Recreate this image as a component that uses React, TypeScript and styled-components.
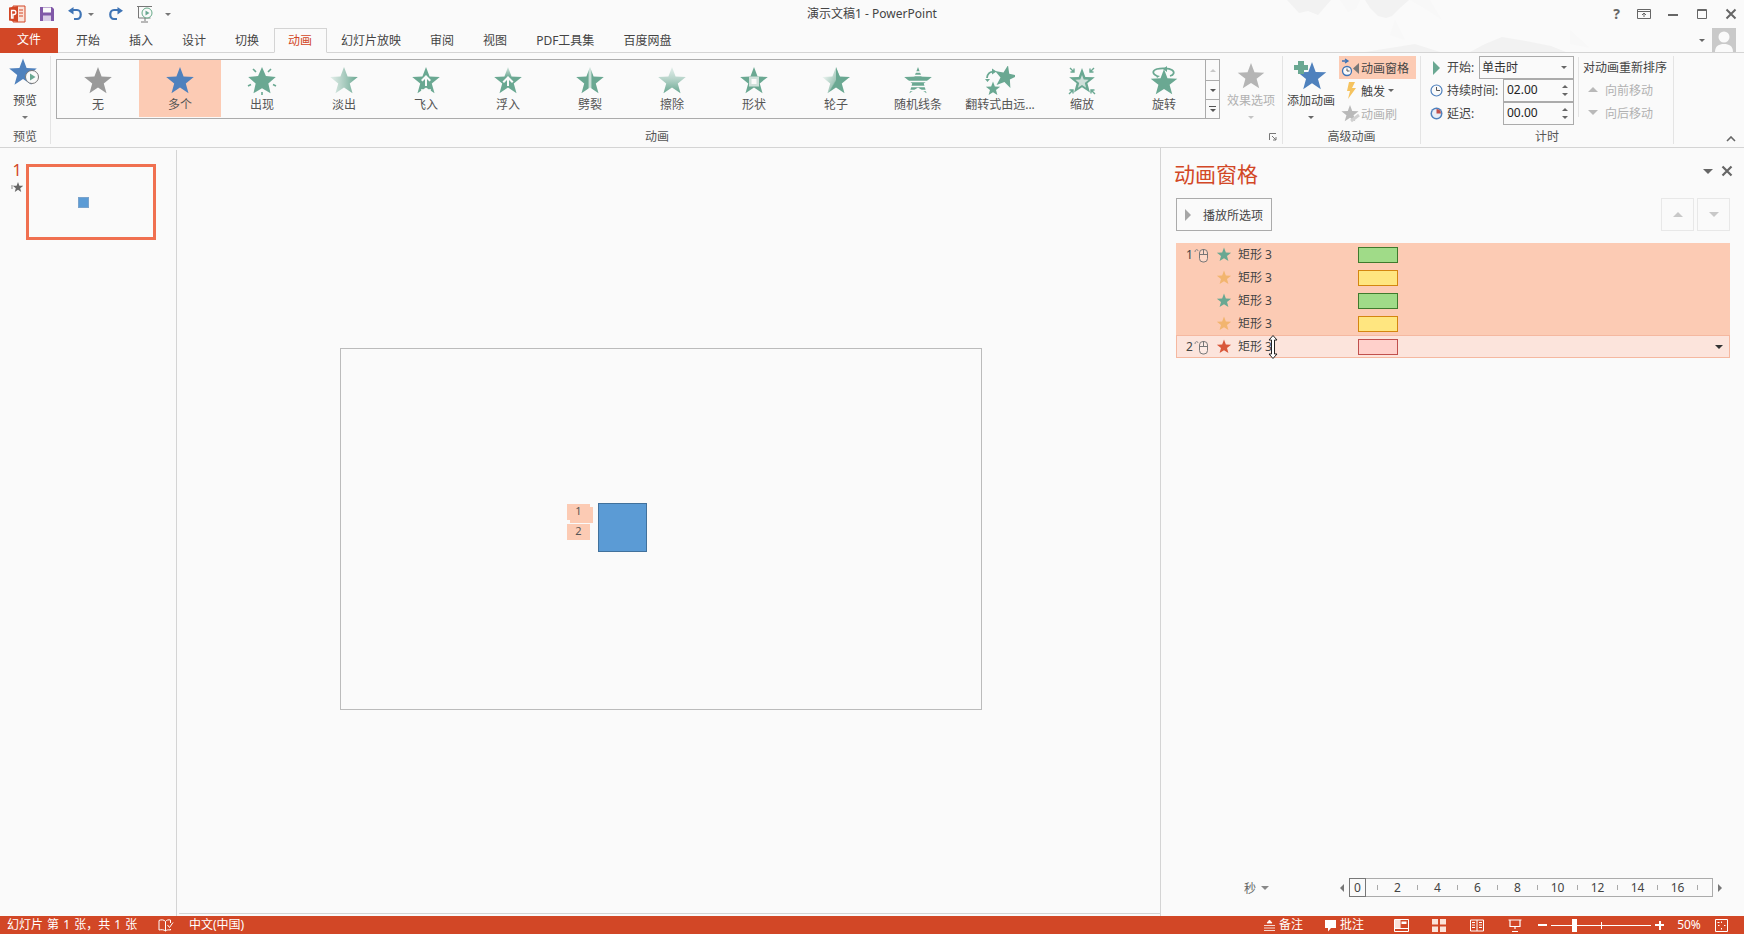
import React from 'react'
import styled, { createGlobalStyle } from 'styled-components'

const RED = '#d24726'
const GREEN = '#6aa892'
const BLUE = '#4f81bd'
const PEACH = '#fccbb4'

const star = (cx: number, cy: number, R: number, rot = 0, ratio = 0.42) => {
  const pts: string[] = []
  for (let i = 0; i < 10; i++) {
    const rad = i % 2 === 0 ? R : R * ratio
    const a = ((-90 + rot + i * 36) * Math.PI) / 180
    pts.push(`${(cx + rad * Math.cos(a)).toFixed(2)},${(cy + rad * Math.sin(a)).toFixed(2)}`)
  }
  return pts.join(' ')
}

const Grad: React.FC<{ id: string; x2?: number; y2?: number; x1?: number; y1?: number; stops: [number, string][] }> = ({
  id,
  x1 = 0,
  y1 = 0,
  x2 = 1,
  y2 = 0,
  stops
}) => (
  <defs>
    <linearGradient id={id} x1={x1} y1={y1} x2={x2} y2={y2}>
      {stops.map(([o, c]) => (
        <stop key={o} offset={o} stopColor={c} />
      ))}
    </linearGradient>
  </defs>
)

const Arrows: React.FC<{ d: string; color?: string; width?: number }> = ({ d, color = GREEN, width = 1.4 }) => (
  <path d={d} fill="none" stroke={color} strokeWidth={width} />
)

const GalleryIcon: React.FC<{ kind: string }> = ({ kind }) => {
  const main = star(15, 15.5, 14.5)
  let body: React.ReactNode = <polygon points={main} fill={GREEN} />
  if (kind === 'none') body = <polygon points={main} fill="#9a9a9a" />
  if (kind === 'multi') body = <polygon points={main} fill={BLUE} />
  if (kind === 'appear')
    body = (
      <>
        <polygon points={star(15, 15.5, 14.5, 0, 0.46)} fill={GREEN} />
        <Arrows d="M6 3l3 3M24 3l-3 3M1 20l3-1.500M29 20l-3-1.500M15 26v3" width={1.6} />
      </>
    )
  if (kind === 'fade')
    body = (
      <>
        <Grad id="g-fade" stops={[[0, '#e4efeb'], [0.55, '#a5c9bc'], [1, GREEN]]} />
        <polygon points={main} fill="url(#g-fade)" />
      </>
    )
  if (kind === 'fly')
    body = (
      <>
        <polygon points={main} fill={GREEN} />
        <path d="M15 9l-5 5 1.500 1.500 2.500-2.500v7h2v-7l2.500 2.500 1.500-1.500z" fill="#fafafa" />
        <path d="M11 23v6M15 23v6M19 23v6" stroke="#fafafa" strokeWidth="1.500" />
      </>
    )
  if (kind === 'float')
    body = (
      <>
        <Grad id="g-float" x2={0} y2={1} stops={[[0, '#d5e6df'], [0.4, GREEN], [1, GREEN]]} />
        <polygon points={main} fill="url(#g-float)" />
        <path d="M15 10l-5.500 5.500 1.500 1.500 3-3v6h2v-6l3 3 1.500-1.500z" fill="#fafafa" />
      </>
    )
  if (kind === 'split')
    body = (
      <>
        <Grad id="g-split" stops={[[0, GREEN], [0.42, GREEN], [0.5, '#e4efeb'], [0.58, GREEN], [1, GREEN]]} />
        <polygon points={main} fill="url(#g-split)" />
      </>
    )
  if (kind === 'wipe')
    body = (
      <>
        <Grad id="g-wipe" x2={0} y2={1} stops={[[0, '#e4efeb'], [0.45, '#b7d4ca'], [1, GREEN]]} />
        <polygon points={main} fill="url(#g-wipe)" />
      </>
    )
  if (kind === 'shape')
    body = (
      <>
        <polygon points={main} fill={GREEN} />
        <rect x="10" y="10.500" width="10" height="10" fill="#cfe0da" />
        <rect x="12.500" y="13" width="5" height="5" fill="#fafafa" />
      </>
    )
  if (kind === 'wheel')
    body = (
      <>
        <Grad id="g-wheel" x1={0.05} y1={0.3} x2={0.5} y2={0.55} stops={[[0, '#eef5f2'], [0.9, '#a5c9bc'], [1, GREEN]]} />
        <polygon points={main} fill="url(#g-wheel)" />
        <polygon points="15,1 15,15 29,11 19,11" fill={GREEN} />
      </>
    )
  if (kind === 'bars')
    body = (
      <>
        <polygon points={main} fill={GREEN} />
        <path d="M0 6h30M0 9.500h30M0 15.500h30M0 20.500h30M0 24.500h30" stroke="#fafafa" strokeWidth="1.500" />
      </>
    )
  if (kind === 'flip')
    body = (
      <>
        <polygon points={star(20.5, 11, 12, 12)} fill={GREEN} />
        <polygon points={star(8, 23, 7.5)} fill={GREEN} />
        <Arrows d="M2 12c0-4 3-6.500 6-6" width={1.8} />
        <path d="M7 2.500l4.500 3-4.500 3zM0 13h5l-2.500 3z" fill={GREEN} />
      </>
    )
  if (kind === 'zoom')
    body = (
      <>
        <polygon points={star(15, 15.5, 13.5)} fill={GREEN} />
        <polygon points={star(15, 16, 7)} fill="#cfe0da" />
        <Arrows d="M3 2l4 4M7 2.500V6H3.500M27 2l-4 4M23 2.500V6h3.500M2 28l4-4M2.500 24H6v3.500M28 28l-4-4M27.500 24H24v3.500" />
      </>
    )
  if (kind === 'spin')
    body = (
      <>
        <polygon points={star(15, 17, 14)} fill={GREEN} />
        <Arrows d="M8 10C3 8 3 4.500 8 3c4.500-1.200 12-.8 15 1 3 2 2 5-2 6" width={1.7} />
        <path d="M14 3l4-3v6zM7 9l4 1-3 2z" fill={GREEN} />
      </>
    )
  return (
    <GallerySvg viewBox="0 0 30 30" width="30" height="30">
      {body}
    </GallerySvg>
  )
}

const galleryItems = [
  ['none', '无'],
  ['multi', '多个'],
  ['appear', '出现'],
  ['fade', '淡出'],
  ['fly', '飞入'],
  ['float', '浮入'],
  ['split', '劈裂'],
  ['wipe', '擦除'],
  ['shape', '形状'],
  ['wheel', '轮子'],
  ['bars', '随机线条'],
  ['flip', '翻转式由远...'],
  ['zoom', '缩放'],
  ['spin', '旋转']
]

const tabs = ['开始', '插入', '设计', '切换', '动画', '幻灯片放映', '审阅', '视图', 'PDF工具集', '百度网盘']

const rows = [
  { num: '1', color: GREEN, bar: 'green' },
  { num: '', color: '#f2b56f', bar: 'yellow' },
  { num: '', color: GREEN, bar: 'green' },
  { num: '', color: '#f2b56f', bar: 'yellow' },
  { num: '2', color: '#d9573a', bar: 'red', hover: true }
]

const barColors: Record<string, [string, string]> = {
  green: ['#a0db88', '#3f7a2d'],
  yellow: ['#ffe680', '#d4860f'],
  red: ['#ffd0cb', '#c0504d']
}

const rulerNums = ['0', '2', '4', '6', '8', '10', '12', '14', '16']

const MouseIcon = () => (
  <svg width="16" height="16" viewBox="0 0 16 16">
    <path d="M1 5c0-3 3-3 3-1" fill="none" stroke="#888" />
    <rect x="5.500" y="2.500" width="8" height="12.500" rx="3.500" fill="#fff" fillOpacity=".25" stroke="#777" />
    <path d="M5.500 7.500h8M9.500 2.500v5" stroke="#777" />
  </svg>
)

const AppIcon = () => (
  <svg width="18" height="18" viewBox="0 0 18 18">
    <path d="M5 1h12v16H5z" fill="#fbe3da" stroke="#d24726" />
    <path d="M11 5h4M11 8h4M11 11h4" stroke="#d24726" />
    <path d="M1 2.500 10 1v16l-9-1.500z" fill="#d24726" />
    <path d="M3.500 13V5.500h2.500c2.500 0 2.500 4 0 4h-1V13z" fill="none" stroke="#fff" strokeWidth="1.300" />
  </svg>
)

const SaveIcon = () => (
  <svg width="16" height="16" viewBox="0 0 16 16">
    <path d="M1 1h12l2 2v12H1z" fill="#8058a8" />
    <rect x="4" y="1.500" width="8" height="5" fill="#fafafa" />
    <rect x="4" y="9.500" width="8" height="5.500" fill="#d9cce6" />
  </svg>
)

const UndoIcon: React.FC<{ flip?: boolean }> = ({ flip }) => (
  <svg width="15" height="14" viewBox="0 0 15 14" style={flip ? { transform: 'scaleX(-1)' } : undefined}>
    <path d="M3 3h6c5 0 5 9 0 9H6" fill="none" stroke="#3f74b5" strokeWidth="2.200" />
    <path d="M5.500 0v7.500L0 3.800z" fill="#3f74b5" />
  </svg>
)

const PreviewSmall = () => (
  <svg width="18" height="20" viewBox="0 0 18 20">
    <path d="M1 2.500h15M2.500 3v11h12M9 14v3M5 18h7" fill="none" stroke="#777" />
    <circle cx="11" cy="9" r="5" fill="#fafafa" stroke="#6a8" />
    <path d="M9.500 6.500l4 2.500-4 2.500z" fill={GREEN} />
  </svg>
)

const WinIcon: React.FC<{ kind: string }> = ({ kind }) => (
  <svg width="14" height="12" viewBox="0 0 14 12">
    {kind === 'ribbon' && (
      <path d="M.5 1.500h13v9H.5zM.5 3.500h13M7 9V5M5 7l2-2 2 2" fill="none" stroke="#666" />
    )}
    {kind === 'min' && <path d="M2 7h10" stroke="#666" strokeWidth="2" />}
    {kind === 'max' && <path d="M2.500 1.500h9v9h-9zM2.500 2.500h9" fill="none" stroke="#666" />}
    {kind === 'close' && <path d="M2.500 1.500l9 9M11.500 1.500l-9 9" fill="none" stroke="#666" strokeWidth="2" />}
  </svg>
)

const App: React.FC = () => {
  return (
    <Page>
      <GlobalStyle />
      <Header>
        <Clouds viewBox="0 0 460 52" width="460" height="52">
          <path d="M7 0h44l-6 7-7 8-10-4-9 2zM85 0h44l-9 8-8 8-6 2-8-2-8-8zM85 52l50-8 25 8zM190 52l15-8 17-7 24 4 25 5 15 6z" fill="#f2f2f2" />
          <path d="M60 0h20l-4 9-8 3zM130 0h20l12 20-15-10zM115 20l10 20-15-5zM290 30l20 18-20-4z" fill="#f8f8f8" />
        </Clouds>
        <TitleBar>
          <QuickTools>
            <AppIcon />
            <SaveIcon />
            <UndoIcon />
            <Caret $dir="down" $size={3} $color="#777" />
            <UndoIcon flip />
            <PreviewSmall />
            <MoreCaret>
              <Caret $dir="down" $size={3} $color="#777" />
            </MoreCaret>
          </QuickTools>
          <WindowTitle>演示文稿1 - PowerPoint</WindowTitle>
          <WindowControls>
            <Help>?</Help>
            <WinIcon kind="ribbon" />
            <WinIcon kind="min" />
            <WinIcon kind="max" />
            <WinIcon kind="close" />
          </WindowControls>
        </TitleBar>
        <TabRow>
          <FileTab>文件</FileTab>
          <Tabs>
            {tabs.map(t => (
              <Tab key={t} $active={t === '动画'}>
                {t}
              </Tab>
            ))}
          </Tabs>
          <Account>
            <Caret $dir="down" $size={3} $color="#666" />
            <Avatar viewBox="0 0 24 24" width="24" height="24">
              <rect width="24" height="24" fill="#c9c9c9" />
              <circle cx="12" cy="9" r="5.500" fill="#fafafa" />
              <path d="M3 24c0-6 4-8 9-8s9 2 9 8z" fill="#fafafa" />
            </Avatar>
          </Account>
        </TabRow>
      </Header>

      <Ribbon>
        <Group $w={51}>
          <GroupBody>
            <LargeButton $w={50}>
              <IconBox>
                <svg width="36" height="28" viewBox="0 0 36 28" overflow="visible">
                  <polygon points={star(16, 10, 14.5)} fill={BLUE} />
                  <circle cx="25" cy="14" r="6.500" fill="#fafafa" stroke="#777" />
                  <path d="M23 10.500l5.500 3.500-5.500 3.500z" fill={GREEN} />
                </svg>
              </IconBox>
              <LargeLabel>预览</LargeLabel>
              <Caret $dir="down" $size={3} $color="#777" />
            </LargeButton>
          </GroupBody>
          <GroupLabel>预览</GroupLabel>
        </Group>

        <Group $w={1232}>
          <GroupBody>
            <Gallery>
              {galleryItems.map(([kind, label]) => (
                <GalleryItem key={kind} $active={kind === 'multi'}>
                  <GalleryIcon kind={kind} />
                  <GalleryLabel>{label}</GalleryLabel>
                </GalleryItem>
              ))}
              <GalleryScroll>
                <ScrollCell>
                  <Caret $dir="up" $size={3} $color="#c8c8c8" />
                </ScrollCell>
                <ScrollCell>
                  <Caret $dir="down" $size={3} $color="#555" />
                </ScrollCell>
                <ScrollCell>
                  <MoreLine />
                  <Caret $dir="down" $size={3} $color="#555" />
                </ScrollCell>
              </GalleryScroll>
            </Gallery>
            <LargeButton $w={62}>
              <IconBox>
                <svg width="30" height="28" viewBox="0 0 30 28">
                  <polygon points={star(15, 14, 14)} fill="#b5b5b5" />
                </svg>
              </IconBox>
              <LargeLabel $disabled>效果选项</LargeLabel>
              <Caret $dir="down" $size={3} $color="#c4c4c4" />
            </LargeButton>
          </GroupBody>
          <GroupLabel $pr={19}>动画</GroupLabel>
          <Launcher viewBox="0 0 8 8" width="8" height="8">
            <path d="M.5 7V.5H7M3 3l4 4M7 4v3H4" fill="none" stroke="#777" />
          </Launcher>
        </Group>

        <Group $w={138}>
          <GroupBody>
            <LargeButton $w={56}>
              <IconBox>
                <svg width="40" height="28" viewBox="0 0 40 28" overflow="visible">
                  <polygon points={star(21, 14, 15)} fill={BLUE} />
                  <path d="M7 -2h6v4h4v5h-4v4H7V7H3V2h4z" fill={GREEN} />
                </svg>
              </IconBox>
              <LargeLabel>添加动画</LargeLabel>
              <Caret $dir="down" $size={3} $color="#666" />
            </LargeButton>
            <SmallColumn>
              <SmallButton $active>
                <svg width="20" height="20" viewBox="0 0 20 20">
                  <path d="M1 3h5M4 1l3 2-3 2" fill="none" stroke="#3f74b5" strokeWidth="1.300" />
                  <circle cx="6" cy="13" r="4.500" fill="#fafafa" stroke="#3f74b5" strokeWidth="1.300" />
                  <path d="M6 10.500V13h2.500" fill="none" stroke="#555" />
                  <path d="M18 5v11l-6-5.500z" fill="#777" />
                </svg>
                动画窗格
              </SmallButton>
              <SmallButton>
                <svg width="20" height="20" viewBox="0 0 20 20">
                  <path d="M8 1h6l-3 6h4L7 18l2-8H6z" fill="#f5c35f" />
                </svg>
                触发
                <Caret $dir="down" $size={3} $color="#666" />
              </SmallButton>
              <SmallButton $disabled>
                <svg width="20" height="20" viewBox="0 0 20 20">
                  <polygon points={star(9, 10, 9)} fill="#b9b9b9" />
                  <path d="M10 17l8-6" stroke="#d0d0d0" strokeWidth="3" />
                </svg>
                动画刷
              </SmallButton>
            </SmallColumn>
          </GroupBody>
          <GroupLabel>高级动画</GroupLabel>
        </Group>

        <Group $w={253}>
          <GroupBody>
            <TimingColumn>
              <TimingRow>
                <TimingIcon>
                  <Caret $dir="right" $size={7} $color={GREEN} />
                </TimingIcon>
                <span>开始:</span>
                <Combo $w={95}>
                  单击时
                  <Caret $dir="down" $size={3} $color="#666" />
                </Combo>
              </TimingRow>
              <TimingRow>
                <TimingIcon>
                  <svg width="13" height="13" viewBox="0 0 13 13">
                    <circle cx="6.500" cy="6.500" r="5.500" fill="#fafafa" stroke="#4f81bd" strokeWidth="1.200" />
                    <path d="M6.500 3v3.500H10" fill="none" stroke="#555" />
                  </svg>
                </TimingIcon>
                <span>持续时间:</span>
                <SpinField>
                  02.00
                  <Spinner>
                    <Caret $dir="up" $size={3} $color="#666" />
                    <Caret $dir="down" $size={3} $color="#666" />
                  </Spinner>
                </SpinField>
              </TimingRow>
              <TimingRow>
                <TimingIcon>
                  <svg width="13" height="13" viewBox="0 0 13 13">
                    <circle cx="6.500" cy="6.500" r="6" fill="#4f81bd" />
                    <circle cx="6.500" cy="6.500" r="4.500" fill="#e8eef6" />
                    <path d="M6.500 6.500V2a4.500 4.500 0 0 1 4.500 4.500z" fill="#c0504d" />
                  </svg>
                </TimingIcon>
                <span>延迟:</span>
                <SpinField>
                  00.00
                  <Spinner>
                    <Caret $dir="up" $size={3} $color="#666" />
                    <Caret $dir="down" $size={3} $color="#666" />
                  </Spinner>
                </SpinField>
              </TimingRow>
            </TimingColumn>
            <ReorderColumn>
              <ReorderTitle>对动画重新排序</ReorderTitle>
              <ReorderItem>
                <Caret $dir="up" $size={5} $color="#b9b9b9" />
                向前移动
              </ReorderItem>
              <ReorderItem>
                <Caret $dir="down" $size={5} $color="#b9b9b9" />
                向后移动
              </ReorderItem>
            </ReorderColumn>
          </GroupBody>
          <GroupLabel>计时</GroupLabel>
        </Group>
        <Collapse viewBox="0 0 10 6" width="10" height="6">
          <path d="M1 5l4-4 4 4" fill="none" stroke="#666" strokeWidth="1.600" />
        </Collapse>
      </Ribbon>

      <Main>
        <ThumbPane>
          <ThumbIndex>
            <ThumbNum>1</ThumbNum>
            <svg width="12" height="11" viewBox="0 0 12 11">
              <polygon points={star(7, 5.500, 5.500)} fill="#666" />
              <path d="M0 4h2M0 6h2" stroke="#888" />
            </svg>
          </ThumbIndex>
          <Thumb>
            <ThumbShape />
          </Thumb>
        </ThumbPane>

        <SlideArea>
          <Slide>
            <OrderTag $left={229} $top={158} />
            <OrderTag $left={226} $top={155}>
              1
            </OrderTag>
            <OrderTag $left={226} $top={175}>
              2
            </OrderTag>
            <Shape />
          </Slide>
        </SlideArea>

        <AnimPane>
          <PaneTitleRow>
            <PaneTitle>动画窗格</PaneTitle>
            <PaneControls>
              <Caret $dir="down" $size={5} $color="#666" />
              <svg width="12" height="12" viewBox="0 0 12 12">
                <path d="M1.500 1.500l9 9M10.500 1.500l-9 9" stroke="#666" strokeWidth="2.200" />
              </svg>
            </PaneControls>
          </PaneTitleRow>
          <PlayRow>
            <PlayButton>
              <Caret $dir="right" $size={6} $color="#a6a6a6" />
              播放所选项
            </PlayButton>
            <MoveButton>
              <Caret $dir="up" $size={5} $color="#c8c8c8" />
            </MoveButton>
            <MoveButton>
              <Caret $dir="down" $size={5} $color="#c8c8c8" />
            </MoveButton>
          </PlayRow>
          <List>
            {rows.map((r, i) => (
              <Row key={i} $hover={r.hover}>
                <RowNum>{r.num}</RowNum>
                <RowMouse>{r.num && <MouseIcon />}</RowMouse>
                <svg width="16" height="15" viewBox="0 0 16 15">
                  <polygon points={star(8, 8, 7.500)} fill={r.color} />
                </svg>
                <RowName>矩形 3</RowName>
                <Bar $fill={barColors[r.bar][0]} $line={barColors[r.bar][1]} />
                {r.hover && (
                  <>
                    <RowCaret>
                      <Caret $dir="down" $size={4} $color="#333" />
                    </RowCaret>
                    <ResizeCursor viewBox="0 0 10 24" width="10" height="24">
                      <path
                        d="M5 .5 9 5H6.500v14H9l-4 4.500L1 19h2.500V5H1z"
                        fill="#fff"
                        stroke="#222"
                      />
                    </ResizeCursor>
                  </>
                )}
              </Row>
            ))}
          </List>
          <Timeline>
            <Seconds>
              秒
              <Caret $dir="down" $size={4} $color="#888" />
            </Seconds>
            <Caret $dir="left" $size={4} $color="#777" />
            <Ruler>
              {rulerNums.map((n, i) => (
                <RulerCell key={n}>
                  <RulerNum $current={i === 0}>{n}</RulerNum>
                  <RulerTick />
                </RulerCell>
              ))}
            </Ruler>
            <Caret $dir="right" $size={4} $color="#777" />
          </Timeline>
        </AnimPane>
      </Main>

      <StatusBar>
        <StatusText $w={146} $pl={7}>
          幻灯片 第 1 张，共 1 张
        </StatusText>
        <StatusSlot $w={40}>
          <svg width="16" height="13" viewBox="0 0 16 13">
            <path d="M1 1.500c2-1 5-1 6.500 1v9.500c-1.500-1.500-4.500-1.500-6.500-1zM7.500 2.500c1-1.500 3-2 5-1.500v3M7.500 12c1.200-1 2.500-1.300 5-1v-1" fill="none" stroke="#fff" />
            <path d="M9.500 6l2 2.500 3.500-5" fill="none" stroke="#fff" />
          </svg>
        </StatusSlot>
        <StatusText $w={70} $pl={3}>
          中文(中国)
        </StatusText>
        <StatusRight>
          <StatusSlot $w={50}>
            <svg width="13" height="13" viewBox="0 0 13 13">
              <path d="M6.500 1l2.500 3H4zM1 6.500h11M1 9h11M1 11.500h11" fill="#fff" stroke="#fff" strokeWidth=".8" />
            </svg>
            <span>备注</span>
          </StatusSlot>
          <StatusSlot $w={46} $ml={13}>
            <svg width="13" height="13" viewBox="0 0 13 13">
              <path d="M1 1h11v8H7l-3 3.500V9H1z" fill="#fff" />
            </svg>
            <span>批注</span>
          </StatusSlot>
          <StatusSlot $w={38} $ml={15}>
            <svg width="15" height="13" viewBox="0 0 15 13">
              <path d="M.5.500h14v12H.5zM6 .5v9M.5 9.500h14" fill="none" stroke="#fff" />
              <rect x="7.500" y="2.500" width="5" height="2.500" fill="#fff" />
              <rect x="1" y="1" width="5" height="8" fill="#fbe3da" />
            </svg>
          </StatusSlot>
          <StatusSlot $w={38}>
            <svg width="14" height="13" viewBox="0 0 14 13">
              <path d="M0 0h6v5.500H0zM8 0h6v5.500H8zM0 7.500h6V13H0zM8 7.500h6V13H8z" fill="#fbe3da" />
            </svg>
          </StatusSlot>
          <StatusSlot $w={38}>
            <svg width="14" height="13" viewBox="0 0 14 13">
              <path d="M.5 1h13v11H.5zM7 1v11M2 3.500h3M2 6h3M2 8.500h3M9 3.500h3M9 6h3M9 8.500h3" fill="none" stroke="#fff" />
            </svg>
          </StatusSlot>
          <StatusSlot $w={38}>
            <svg width="14" height="13" viewBox="0 0 14 13">
              <path d="M.5 1h13M2 1v6.500h10V1M7 7.500V10M4 12.500h6" fill="none" stroke="#fff" strokeWidth="1.200" />
            </svg>
          </StatusSlot>
          <Zoom>
            <ZoomSign>
              <ZoomBar />
            </ZoomSign>
            <ZoomTrack>
              <ZoomCenter />
              <ZoomHandle />
            </ZoomTrack>
            <ZoomSign>
              <ZoomBar />
              <ZoomBar $vertical />
            </ZoomSign>
          </Zoom>
          <StatusText $w={36} $center $ml={7}>
            50%
          </StatusText>
          <StatusSlot $w={18} $ml={5}>
            <svg width="13" height="13" viewBox="0 0 13 13">
              <path d="M.5.500h12v12H.5zM2.500 3.500l2 0M6.500 2.500v1.500M3 6.500h1.500M9 6.500h1.500M6.500 9v1.500" fill="none" stroke="#fff" />
            </svg>
          </StatusSlot>
        </StatusRight>
      </StatusBar>
    </Page>
  )
}

const GlobalStyle = createGlobalStyle`
  html, body {
    margin: 0;
    padding: 0;
    background: #fafafa;
  }
  body {
    font-family: "Noto Sans", "Noto Sans CJK SC", sans-serif;
    font-size: 12px;
    color: #444;
  }
  * {
    box-sizing: border-box;
  }
`

const Page = styled.div`
  width: 1744px;
  height: 934px;
  display: flex;
  flex-direction: column;
  overflow: hidden;
  background: #fafafa;
`

const Header = styled.header`
  position: relative;
`

const Clouds = styled.svg`
  position: absolute;
  left: 1280px;
  top: 0;
`

const TitleBar = styled.div`
  position: relative;
  height: 28px;
  display: grid;
  grid-template-columns: 1fr auto 1fr;
  align-items: center;
`

const QuickTools = styled.div`
  display: flex;
  align-items: center;
  gap: 13px;
  padding-left: 8px;
  > :nth-child(4) {
    margin-left: -8px;
  }
  > :nth-child(5) {
    margin-left: 1px;
  }
`

const MoreCaret = styled.span`
  display: flex;
  margin-left: -2px;
`

const WindowTitle = styled.div`
  line-height: 16px;
  color: #444;
`

const WindowControls = styled.div`
  display: flex;
  align-items: center;
  justify-content: flex-end;
  gap: 15px;
  padding-right: 6px;
`

const Help = styled.span`
  font-weight: 700;
  font-size: 14px;
  line-height: 14px;
  color: #666;
  margin-right: 2px;
`

const TabRow = styled.div`
  position: relative;
  height: 25px;
  display: flex;
  border-bottom: 1px solid #d4d4d4;
`

const FileTab = styled.div`
  width: 58px;
  height: 25px;
  background: ${RED};
  color: #fff;
  text-align: center;
  line-height: 24px;
`

const Tabs = styled.nav`
  display: flex;
  margin-left: 3.5px;
`

const Tab = styled.div<{ $active?: boolean }>`
  height: 25px;
  padding: 0 13.5px;
  line-height: 23px;
  border: 1px solid ${p => (p.$active ? '#d4d4d4' : 'transparent')};
  border-bottom-color: ${p => (p.$active ? '#fafafa' : 'transparent')};
  color: ${p => (p.$active ? RED : '#444')};
  background: ${p => (p.$active ? '#fafafa' : 'transparent')};
`

const Account = styled.div`
  margin-left: auto;
  display: flex;
  align-items: center;
  gap: 7px;
  padding-right: 8px;
`

const Avatar = styled.svg`
  display: block;
`

const Ribbon = styled.div`
  position: relative;
  height: 95px;
  display: flex;
  border-bottom: 1px solid #d4d4d4;
`

const Group = styled.section<{ $w: number }>`
  position: relative;
  width: ${p => p.$w}px;
  margin: 3px 0 3px;
  display: flex;
  flex-direction: column;
  border-right: 1px solid #e4e4e4;
`

const GroupBody = styled.div`
  flex: 1;
  display: flex;
  min-height: 0;
`

const GroupLabel = styled.div<{ $pr?: number }>`
  height: 16px;
  line-height: 18px;
  text-align: center;
  color: #555;
  padding-right: ${p => p.$pr ?? 0}px;
`

const Launcher = styled.svg`
  position: absolute;
  right: 5px;
  bottom: 3px;
`

const Collapse = styled.svg`
  position: absolute;
  right: 8px;
  bottom: 5px;
`

const LargeButton = styled.div<{ $w: number }>`
  width: ${p => p.$w}px;
  flex-shrink: 0;
  display: flex;
  flex-direction: column;
  align-items: center;
  padding-top: 7px;
`

const IconBox = styled.div`
  height: 28px;
`

const LargeLabel = styled.div<{ $disabled?: boolean }>`
  height: 18px;
  line-height: 18px;
  margin: 1px 0 6px;
  white-space: nowrap;
  color: ${p => (p.$disabled ? '#b1b1b1' : '#444')};
`

const Gallery = styled.div`
  width: 1164px;
  height: 60px;
  flex-shrink: 0;
  margin: 3px 0 0 5px;
  display: flex;
  border: 1px solid #ababab;
`

const GalleryItem = styled.div<{ $active?: boolean }>`
  width: 82px;
  height: 57px;
  display: flex;
  flex-direction: column;
  align-items: center;
  padding-top: 6px;
  background: ${p => (p.$active ? PEACH : 'transparent')};
`

const GallerySvg = styled.svg`
  display: block;
  flex-shrink: 0;
`

const GalleryLabel = styled.div`
  line-height: 18px;
  color: #555;
  white-space: nowrap;
`

const GalleryScroll = styled.div`
  margin-left: auto;
  width: 14px;
  display: grid;
  grid-template-rows: 20px 19px 19px;
  border-left: 1px solid #ababab;
`

const ScrollCell = styled.div`
  display: flex;
  flex-direction: column;
  align-items: center;
  justify-content: center;
  gap: 2px;
  & + & {
    border-top: 1px solid #ababab;
  }
`

const MoreLine = styled.span`
  width: 7px;
  height: 1px;
  background: #555;
`

const Caret = styled.span<{ $dir: 'up' | 'down' | 'left' | 'right'; $size: number; $color: string }>`
  display: inline-block;
  flex-shrink: 0;
  width: 0;
  height: 0;
  ${p => {
    const s = `${p.$size}px solid transparent`
    const c = `${p.$size}px solid ${p.$color}`
    if (p.$dir === 'down') return `border-left: ${s}; border-right: ${s}; border-top: ${c};`
    if (p.$dir === 'up') return `border-left: ${s}; border-right: ${s}; border-bottom: ${c};`
    if (p.$dir === 'left') return `border-top: ${s}; border-bottom: ${s}; border-right: ${c};`
    return `border-top: ${s}; border-bottom: ${s}; border-left: ${c};`
  }}
`

const SmallColumn = styled.div`
  display: flex;
  flex-direction: column;
`

const SmallButton = styled.div<{ $active?: boolean; $disabled?: boolean }>`
  width: 77px;
  height: 23px;
  display: flex;
  align-items: center;
  gap: 0;
  padding-left: 2px;
  background: ${p => (p.$active ? PEACH : 'transparent')};
  color: ${p => (p.$disabled ? '#b1b1b1' : '#444')};
  ${Caret} {
    margin-left: 3px;
  }
`

const TimingColumn = styled.div`
  width: 153px;
  padding-left: 7px;
  flex-shrink: 0;
`

const TimingRow = styled.div`
  height: 23px;
  display: flex;
  align-items: center;
  line-height: 16px;
`

const TimingIcon = styled.span`
  width: 19px;
  display: flex;
  justify-content: center;
  padding-right: 3px;
`

const Combo = styled.div<{ $w: number }>`
  width: ${p => p.$w}px;
  height: 23px;
  margin-left: auto;
  padding: 0 6px 0 2px;
  display: flex;
  align-items: center;
  justify-content: space-between;
  border: 1px solid #ababab;
  color: #333;
`

const SpinField = styled.div`
  width: 71px;
  height: 23px;
  margin-left: auto;
  padding: 0 5px 0 3px;
  display: flex;
  align-items: center;
  justify-content: space-between;
  border: 1px solid #ababab;
  margin-top: -1px;
  font-size: 12px;
  color: #222;
`

const Spinner = styled.span`
  display: flex;
  flex-direction: column;
  gap: 5px;
`

const ReorderColumn = styled.div`
  margin-left: 4px;
  height: 60px;
  margin-top: 1px;
  width: 95px;
  padding-left: 0;
  border-left: 1px solid #e4e4e4;
`

const ReorderTitle = styled.div`
  line-height: 21px;
  margin-left: -2px;
  text-align: center;
  white-space: nowrap;
`

const ReorderItem = styled.div`
  height: 23px;
  display: flex;
  align-items: center;
  gap: 7px;
  padding-left: 9px;
  color: #b1b1b1;
`

const Main = styled.main`
  flex: 1;
  min-height: 0;
  display: flex;
`

const ThumbPane = styled.aside`
  width: 177px;
  margin-top: 2px;
  padding-top: 14px;
  display: flex;
  align-items: flex-start;
  border-right: 1px solid #d4d4d4;
`

const ThumbIndex = styled.div`
  width: 26px;
  margin-top: -2px;
  padding-left: 8px;
  display: flex;
  flex-direction: column;
  align-items: center;
  gap: 4px;
`

const ThumbNum = styled.div`
  color: ${RED};
  font-size: 16px;
  line-height: 16px;
`

const Thumb = styled.div`
  width: 130px;
  height: 76px;
  padding: 30px 0 0 49px;
  border: 3px solid #f07050;
`

const ThumbShape = styled.div`
  width: 11px;
  height: 11px;
  background: #5b9bd5;
  border: 1px solid #7aa3cc;
`

const SlideArea = styled.div`
  width: 981px;
  margin: 0 0 2px 2px;
  padding: 200px 0 0 161px;
  border-bottom: 1px solid #d4d4d4;
`

const Slide = styled.div`
  position: relative;
  width: 642px;
  height: 362px;
  border: 1px solid #bbb;
`

const OrderTag = styled.div<{ $left: number; $top: number }>`
  position: absolute;
  left: ${p => p.$left}px;
  top: ${p => p.$top}px;
  width: 23px;
  height: 16px;
  background: ${PEACH};
  color: #555;
  font-size: 11px;
  line-height: 14px;
  text-align: center;
`

const Shape = styled.div`
  position: absolute;
  left: 257px;
  top: 154px;
  width: 49px;
  height: 49px;
  background: #5b9bd5;
  border: 1px solid #41719c;
`

const AnimPane = styled.section`
  flex: 1;
  min-width: 0;
  display: flex;
  flex-direction: column;
  padding: 0 14px 0 15px;
  border-left: 1px solid #d4d4d4;
`

const PaneTitleRow = styled.div`
  margin-top: 9px;
  height: 34px;
  margin-bottom: 1px;
  display: flex;
  align-items: center;
`

const PaneTitle = styled.h2`
  margin: 0 0 0 -2px;
  font-size: 21px;
  font-weight: 400;
  line-height: 34px;
  color: ${RED};
`

const PaneControls = styled.div`
  margin: 0 -3px 6px auto;
  display: flex;
  align-items: center;
  gap: 8px;
`

const PlayRow = styled.div`
  margin-top: 6px;
  height: 33px;
  display: flex;
  gap: 3px;
`

const PlayButton = styled.div`
  width: 96px;
  margin-right: auto;
  display: flex;
  align-items: center;
  gap: 12px;
  padding-left: 8px;
  border: 1px solid #ababab;
  white-space: nowrap;
`

const MoveButton = styled.div`
  width: 33px;
  display: flex;
  align-items: center;
  justify-content: center;
  border: 1px solid #e8e8e8;
`

const List = styled.div`
  margin-top: 12px;
  display: flex;
  flex-direction: column;
`

const Row = styled.div<{ $hover?: boolean }>`
  position: relative;
  height: 23px;
  display: flex;
  align-items: center;
  background: ${p => (p.$hover ? '#fce4dc' : PEACH)};
  ${p => p.$hover && 'outline: 1px solid #f5b8a0; outline-offset: -1px;'}
`

const RowNum = styled.span`
  width: 23px;
  padding-left: 10px;
  line-height: 16px;
`

const RowMouse = styled.span`
  width: 17px;
  height: 16px;
  margin-left: -5px;
  margin-right: 5px;
  display: flex;
`

const RowName = styled.span`
  width: 120px;
  margin-left: 6px;
  line-height: 16px;
`

const Bar = styled.span<{ $fill: string; $line: string }>`
  width: 40px;
  height: 16px;
  background: ${p => p.$fill};
  border: 1px solid ${p => p.$line};
`

const RowCaret = styled.span`
  margin: 0 7px 0 auto;
  display: flex;
`

const ResizeCursor = styled.svg`
  position: absolute;
  left: 92px;
  top: 0;
`

const Timeline = styled.div`
  margin-top: auto;
  padding: 0 8px 19px 0;
  display: flex;
  align-items: center;
  justify-content: flex-end;
  gap: 5px;
`

const Seconds = styled.div`
  margin-right: 66px;
  display: flex;
  align-items: center;
  gap: 5px;
  color: #666;
`

const Ruler = styled.div`
  width: 364px;
  height: 19px;
  display: flex;
  border: 1px solid #ababab;
`

const RulerCell = styled.div`
  width: 40px;
  display: flex;
  align-items: center;
`

const RulerNum = styled.span<{ $current?: boolean }>`
  width: 17px;
  margin: ${p => (p.$current ? '-1px 0 -1px -1px' : '0 0 0 -1px')};
  height: ${p => (p.$current ? '19px' : 'auto')};
  text-align: center;
  line-height: 17px;
  border: 1px solid ${p => (p.$current ? '#777' : 'transparent')};
  white-space: nowrap;
`

const RulerTick = styled.span`
  width: 1px;
  height: 5px;
  margin-left: 11px;
  background: #aaa;
`

const StatusBar = styled.footer`
  height: 18px;
  flex-shrink: 0;
  display: flex;
  align-items: center;
  background: ${RED};
  color: #fff;
  line-height: 16px;
`

const StatusRight = styled.div`
  margin-left: auto;
  display: flex;
  align-items: center;
  padding-right: 14px;
`

const StatusText = styled.span<{ $w: number; $pl?: number; $ml?: number; $center?: boolean }>`
  width: ${p => p.$w}px;
  padding-left: ${p => p.$pl ?? 0}px;
  margin-left: ${p => p.$ml ?? 0}px;
  text-align: ${p => (p.$center ? 'center' : 'left')};
  white-space: nowrap;
  word-spacing: 1px;
`

const StatusSlot = styled.span<{ $w: number; $ml?: number }>`
  width: ${p => p.$w}px;
  margin-left: ${p => p.$ml ?? 0}px;
  display: flex;
  align-items: center;
  justify-content: center;
  gap: 3px;
`

const Zoom = styled.div`
  margin-left: 3px;
  width: 127px;
  display: flex;
  align-items: center;
  justify-content: space-between;
`

const ZoomSign = styled.span`
  position: relative;
  width: 9px;
  height: 9px;
  margin: 0 0 0 1px;
`

const ZoomBar = styled.i<{ $vertical?: boolean }>`
  position: absolute;
  background: #fff;
  ${p =>
    p.$vertical
      ? 'left: 3.5px; top: 0; width: 2px; height: 9px;'
      : 'left: 0; top: 3.5px; width: 9px; height: 2px;'}
`

const ZoomTrack = styled.span`
  position: relative;
  width: 100px;
  height: 1px;
  background: #fff;
`

const ZoomCenter = styled.i`
  position: absolute;
  left: 50px;
  top: -3px;
  width: 1px;
  height: 7px;
  background: #fff;
`

const ZoomHandle = styled.i`
  position: absolute;
  left: 21px;
  top: -6px;
  width: 5px;
  height: 13px;
  background: #fff;
`

export default App
